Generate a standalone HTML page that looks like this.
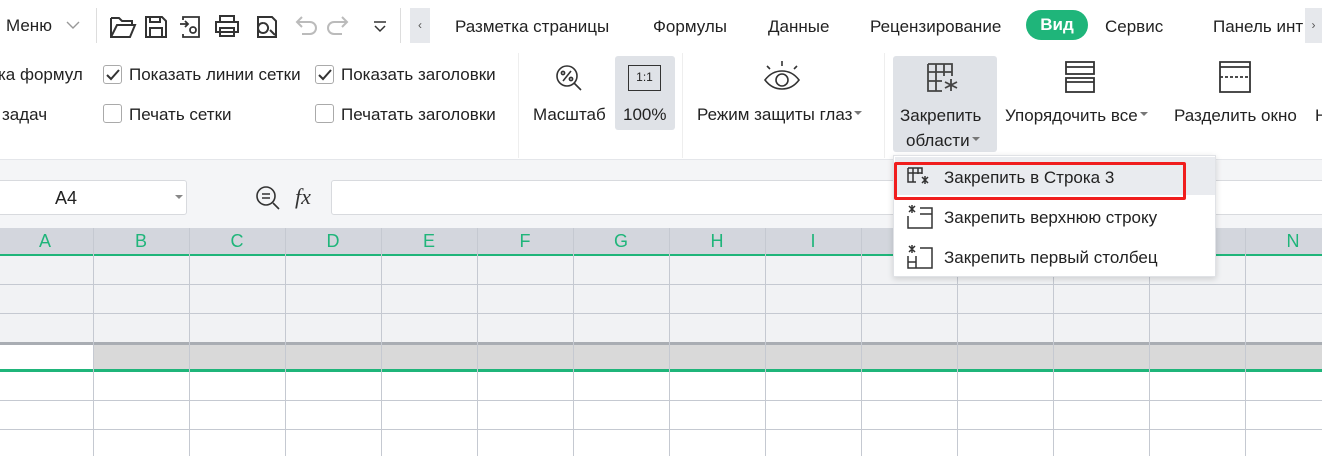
<!DOCTYPE html>
<html><head><meta charset="utf-8"><style>
*{margin:0;padding:0;box-sizing:border-box}
body{width:1322px;height:456px;overflow:hidden;position:relative;background:#fff;font-family:"Liberation Sans","DejaVu Sans",sans-serif;color:#222;font-size:17px}
.a{position:absolute;white-space:nowrap}
.t{font-size:17px;line-height:20px}
.cb{position:absolute;width:19px;height:19px;border:1.5px solid #aaa;border-radius:3px;background:#fff}
.vl{position:absolute;top:0;width:1px;background:#c5c9d1}
.hl{position:absolute;left:0;width:1322px;height:1px;background:#c5c9d1}
.col{position:absolute;top:228px;height:27px;line-height:27px;width:96px;text-align:center;color:#1fb57a;font-size:18px}
.ar{display:inline-block;width:0;height:0;border-left:4px solid transparent;border-right:4px solid transparent;border-top:4px solid #777;vertical-align:top;margin-top:6px;margin-left:2px}
</style></head><body>
<!-- top bar -->
<div class="a t" style="left:6px;top:16px">Меню</div>
<svg class="a" style="left:66px;top:20px" width="14" height="10"><path d="M1 2l6 6 6-6" fill="none" stroke="#999" stroke-width="1.4"/></svg>
<div class="a" style="left:96px;top:8px;width:1px;height:35px;background:#ddd"></div>
<svg class="a" style="left:108px;top:12px" width="290" height="30" fill="none" stroke="#333" stroke-width="2">
<path d="M3 6h8l3 3h10v4M3 6v19h19l5-12H9L3 25"/>
<path d="M38 5h16l4 4v16H38zM42 5v5h10V5M42 25v-9h12v9"/>
<path d="M75 8V5h16v20H75v-3M72 12h8M77 9l3 3-3 3M82 18c0-4 6-4 6 0s-6 4-6 0" stroke-width="1.8"/>
<path d="M112 10V4h14v6M108 10h22v10h-22zM112 16h14v8h-14z"/>
<path d="M150 5h14l4 4v16h-18zM155 11a5 5 0 1 0 0.1 0M162 18l5 5"/>
<path d="M190 10h12a6 6 0 0 1 0 12h-8M194 5l-5 5 5 5" stroke="#bbb"/>
<path d="M238 10h-12a6 6 0 0 0 0 12h8M234 5l5 5-5 5" stroke="#bbb"/>
<path d="M266 10h12M267 14l5 5 5-5" stroke-width="1.5"/>
</svg>
<div class="a" style="left:400px;top:8px;width:1px;height:35px;background:#ddd"></div>
<div class="a" style="left:410px;top:8px;width:20px;height:35px;background:#e6e8ec;text-align:center;line-height:35px;font-size:12px;color:#555">‹</div>
<div class="a t" style="left:455px;top:17px">Разметка страницы</div>
<div class="a t" style="left:653px;top:17px">Формулы</div>
<div class="a t" style="left:768px;top:17px">Данные</div>
<div class="a t" style="left:870px;top:17px">Рецензирование</div>
<div class="a" style="left:1026px;top:10px;width:62px;height:30px;border-radius:15px;background:#1fb57a;color:#fff;font-weight:bold;text-align:center;line-height:30px;font-size:17px">Вид</div>
<div class="a t" style="left:1105px;top:17px">Сервис</div>
<div class="a t" style="left:1213px;top:17px">Панель инт</div>
<div class="a" style="left:1305px;top:8px;width:17px;height:35px;background:#e6e8ec;text-align:center;line-height:35px;font-size:12px;color:#555">›</div>
<!-- ribbon -->
<div class="a t" style="left:-2px;top:65px">ка формул</div>
<div class="a t" style="left:2px;top:105px">задач</div>
<div class="cb" style="left:103px;top:65px"></div>
<svg class="a" style="left:106px;top:69px" width="14" height="12"><path d="M1 6l4 4 8-9" fill="none" stroke="#333" stroke-width="2"/></svg>
<div class="a t" style="left:129px;top:65px">Показать линии сетки</div>
<div class="cb" style="left:103px;top:104px"></div>
<div class="a t" style="left:129px;top:105px">Печать сетки</div>
<div class="cb" style="left:315px;top:65px"></div>
<svg class="a" style="left:318px;top:69px" width="14" height="12"><path d="M1 6l4 4 8-9" fill="none" stroke="#333" stroke-width="2"/></svg>
<div class="a t" style="left:341px;top:65px">Показать заголовки</div>
<div class="cb" style="left:315px;top:104px"></div>
<div class="a t" style="left:341px;top:105px">Печатать заголовки</div>
<div class="a" style="left:518px;top:53px;width:1px;height:105px;background:#eee"></div>
<svg class="a" style="left:553px;top:62px" width="32" height="32" fill="none" stroke="#333" stroke-width="1.6"><circle cx="14" cy="14" r="10"/><path d="M21 21l7 7M10 19l8-10"/><circle cx="10" cy="11" r="1.6"/><circle cx="18" cy="17" r="1.6"/></svg>
<div class="a t" style="left:533px;top:105px">Масштаб</div>
<div class="a" style="left:615px;top:56px;width:60px;height:74px;background:#dfe2e7;border-radius:3px"></div>
<div class="a" style="left:628px;top:65px;width:33px;height:26px;border:1.8px solid #333;font-size:12px;text-align:center;line-height:22px">1:1</div>
<div class="a t" style="left:623px;top:105px">100%</div>
<div class="a" style="left:682px;top:53px;width:1px;height:105px;background:#eee"></div>
<svg class="a" style="left:762px;top:60px" width="40" height="34" fill="none" stroke="#333" stroke-width="1.6"><path d="M3 20c9-12 25-12 34 0c-9 12-25 12-34 0z"/><circle cx="20" cy="20" r="6"/><path d="M20 1v5M5 6l3 3M35 6l-3 3"/></svg>
<div class="a t" style="left:697px;top:105px">Режим защиты глаз<span class="ar"></span></div>
<div class="a" style="left:884px;top:53px;width:1px;height:105px;background:#eee"></div>
<div class="a" style="left:893px;top:56px;width:104px;height:96px;background:#dfe2e7;border-radius:3px"></div>
<svg class="a" style="left:926px;top:62px" width="36" height="32" fill="none" stroke="#444" stroke-width="1.8"><path d="M2 2h24v12M2 2v27h14M2 10h24M2 19h14M10 2v27M18 2v12M25 17v12M19 20l12 6M31 20l-12 6"/></svg>
<div class="a t" style="left:900px;top:106px">Закрепить</div>
<div class="a t" style="left:906px;top:131px">области<span class="ar"></span></div>
<svg class="a" style="left:1064px;top:60px" width="32" height="34" fill="none" stroke="#333" stroke-width="1.8"><rect x="2" y="2" width="28" height="12"/><rect x="2" y="18" width="28" height="14"/><path d="M2 7h28M2 22h28"/></svg>
<div class="a t" style="left:1005px;top:106px">Упорядочить все<span class="ar"></span></div>
<svg class="a" style="left:1218px;top:60px" width="34" height="34" fill="none" stroke="#333" stroke-width="1.8"><path d="M2 2h30v30H2zM2 7h30"/><path d="M2 17h30" stroke-dasharray="3 2"/></svg>
<div class="a t" style="left:1174px;top:106px">Разделить окно</div>
<div class="a t" style="left:1315px;top:106px">Н</div>
<div class="a" style="left:0;top:159px;width:1322px;height:1px;background:#e4e6ea"></div>
<!-- formula bar -->
<div class="a" style="left:0;top:160px;width:1322px;height:68px;background:#f4f5f7"></div>
<div class="a" style="left:-4px;top:180px;width:191px;height:35px;background:#fff;border:1px solid #d8dade;border-radius:3px"></div>
<div class="a" style="left:55px;top:188px;font-size:18px">A4</div>
<svg class="a" style="left:175px;top:195px" width="8" height="5"><path d="M0 0h8L4 4z" fill="#888"/></svg>
<svg class="a" style="left:255px;top:185px" width="26" height="26" fill="none" stroke="#333" stroke-width="1.6"><circle cx="11" cy="11" r="9"/><path d="M18 18l6 6M7 9h8M7 13h8"/></svg>
<div class="a" style="left:295px;top:184px;font-family:'Liberation Serif',serif;font-style:italic;font-size:22px;color:#333">fx</div>
<div class="a" style="left:331px;top:180px;width:1000px;height:35px;background:#fff;border:1px solid #d8dade;border-radius:3px"></div>
<!-- grid -->
<div class="a" style="left:0;top:228px;width:1322px;height:27px;background:#d3d6dd"></div>
<div class="a" style="left:0;top:255px;width:1322px;height:87px;background:#f1f2f4"></div>
<div class="a" style="left:0;top:342px;width:1322px;height:3px;background:#a9adb3"></div>
<div class="a" style="left:93px;top:345px;width:1229px;height:25px;background:#d9d9d9"></div>
<div class="a" style="left:0;top:254px;width:1322px;height:2px;background:#1fb57a"></div>
<div class="a" style="left:0;top:369px;width:1322px;height:3px;background:#1fb57a"></div>
<div class="hl" style="top:284px"></div><div class="hl" style="top:313px"></div>
<div class="hl" style="top:400px"></div><div class="hl" style="top:429px"></div>
<div class="vl" style="left:93px;top:228px;height:228px"></div>
<div class="vl" style="left:189px;top:228px;height:228px"></div>
<div class="vl" style="left:285px;top:228px;height:228px"></div>
<div class="vl" style="left:381px;top:228px;height:228px"></div>
<div class="vl" style="left:477px;top:228px;height:228px"></div>
<div class="vl" style="left:573px;top:228px;height:228px"></div>
<div class="vl" style="left:669px;top:228px;height:228px"></div>
<div class="vl" style="left:765px;top:228px;height:228px"></div>
<div class="vl" style="left:861px;top:228px;height:228px"></div>
<div class="vl" style="left:957px;top:228px;height:228px"></div>
<div class="vl" style="left:1053px;top:228px;height:228px"></div>
<div class="vl" style="left:1149px;top:228px;height:228px"></div>
<div class="vl" style="left:1245px;top:228px;height:228px"></div>
<div class="col" style="left:-3px">A</div><div class="col" style="left:93px">B</div><div class="col" style="left:189px">C</div><div class="col" style="left:285px">D</div><div class="col" style="left:381px">E</div><div class="col" style="left:477px">F</div><div class="col" style="left:573px">G</div><div class="col" style="left:669px">H</div><div class="col" style="left:765px">I</div><div class="col" style="left:1245px">N</div>
<!-- dropdown -->
<div class="a" style="left:893px;top:155px;width:323px;height:122px;background:#fff;border:1px solid #e0e2e6;box-shadow:0 2px 6px rgba(0,0,0,.15)"></div>
<div class="a" style="left:895px;top:157px;width:320px;height:38px;background:#e9ebef"></div>
<div class="a" style="left:894px;top:162px;width:292px;height:38px;border:3px solid #f01d1d;border-radius:2px"></div>
<svg class="a" style="left:907px;top:166px" width="26" height="22" fill="none" stroke="#333" stroke-width="1.5"><path d="M1 2h14v6M1 2v14h8M1 7h14M6 2v14M11 2v6M15 11l6 6M21 11l-6 6M18 10v8"/></svg>
<div class="a t" style="left:944px;top:168px">Закрепить в Строка 3</div>
<svg class="a" style="left:906px;top:204px" width="28" height="26" fill="none" stroke="#333" stroke-width="1.5"><path d="M14 4h12v20H2V12M14 10h12M3 2l6 6M9 2l-6 6M6 1v8"/></svg>
<div class="a t" style="left:944px;top:208px">Закрепить верхнюю строку</div>
<svg class="a" style="left:906px;top:244px" width="28" height="26" fill="none" stroke="#333" stroke-width="1.5"><path d="M14 4h12v20H2V12M2 18h8M10 12v12M3 2l6 6M9 2l-6 6M6 1v8"/></svg>
<div class="a t" style="left:944px;top:248px">Закрепить первый столбец</div>
</body></html>
